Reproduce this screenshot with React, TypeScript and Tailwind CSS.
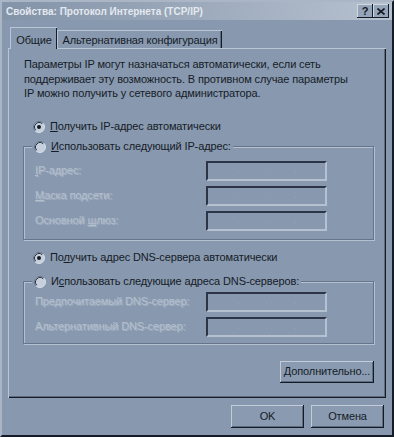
import React from 'react';

const font = { fontFamily: '"Liberation Sans", Arial, sans-serif' };

function Radio({ checked = false }: { checked?: boolean }) {
  return (
    <svg width="12" height="12" viewBox="0 0 12 12" className="shrink-0">
      <circle cx="6" cy="6" r="5.5" fill="#c6d0dc" />
      <path d="M9.89 2.11 A5.5 5.5 0 0 0 2.11 9.89" stroke="#66758b" fill="none" />
      <path d="M2.11 9.89 A5.5 5.5 0 0 0 9.89 2.11" stroke="#d6dee8" fill="none" />
      <path d="M9.18 2.82 A4.5 4.5 0 0 0 2.82 9.18" stroke="#2a3445" fill="none" />
      {checked && <circle cx="6" cy="6" r="2" fill="#111822" />}
    </svg>
  );
}

function U({ children }: { children: React.ReactNode }) {
  return <span className="underline underline-offset-[1px]">{children}</span>;
}

function Field() {
  return (
    <div className="w-[121px] h-[20px] border-2 border-t-[#2b3547] border-l-[#2b3547] border-b-[#b5c1d0] border-r-[#b5c1d0] flex items-center justify-around px-4 text-[9px] text-[#9aa8ba]">
      <span>.</span>
      <span>.</span>
      <span>.</span>
    </div>
  );
}

function Label({ children }: { children: React.ReactNode }) {
  return (
    <span className="text-[#b3bfce] [text-shadow:1px_1px_0_#a2afc1]">{children}</span>
  );
}

function Button({ children, className = '' }: { children: React.ReactNode; className?: string }) {
  return (
    <div
      className={`h-[22px] flex items-center justify-center text-[#151c28] bg-[#8a9ab0] shadow-[inset_-1px_-1px_0_#141b27,inset_1px_1px_0_#c2ccd9,inset_-2px_-2px_0_#5e6c81] ${className}`}
    >
      {children}
    </div>
  );
}

export default function App() {
  return (
    <div
      style={font}
      className="w-[394px] h-[437px] flex flex-col bg-[#8898ae] text-[11px] tracking-[-0.12px] text-[#151c28] border-2 border-t-[#aab6c6] border-l-[#aab6c6] border-r-[#151c28] border-b-[#151c28] overflow-hidden"
    >
      {/* Title bar */}
      <div className="h-[18px] flex items-center justify-between pl-[4px] pr-[3px] bg-gradient-to-r from-[#8393a8] to-[#b6c1cf]">
        <span className="font-bold text-[10px] tracking-normal text-[#e4e9ef]">Свойства: Протокол Интернета (TCP/IP)</span>
        <div className="flex">
          <div className="w-[16px] h-[14px] flex items-center justify-center font-bold text-[11px] text-[#111822] bg-[#95a4b8] shadow-[inset_-1px_-1px_0_#141b27,inset_1px_1px_0_#d0d8e2]">
            ?
          </div>
          <div className="w-[16px] h-[14px] flex items-center justify-center bg-[#95a4b8] shadow-[inset_-1px_-1px_0_#141b27,inset_1px_1px_0_#d0d8e2]">
            <svg width="8" height="7" viewBox="0 0 8 7">
              <path d="M0.5 0.5 L7.5 6.5 M7.5 0.5 L0.5 6.5" stroke="#111822" strokeWidth="1.6" />
            </svg>
          </div>
        </div>
      </div>

      <div className="flex flex-col px-[6px]">
        {/* Tabs */}
        <div className="h-[21px] mt-[7px] flex items-end pl-[2px]">
          <div className="relative z-10 -mb-px h-[22px] w-[47px] flex items-start justify-center pt-[4px] bg-[#8898ae] border-t border-l border-t-[#b9c5d4] border-l-[#b9c5d4] shadow-[inset_-1px_0_0_#151c28]">
            Общие
          </div>
          <div className="h-[18px] w-[165px] flex items-center justify-center pt-[1px] border-t border-l border-t-[#b9c5d4] border-l-[#b9c5d4] shadow-[inset_-1px_0_0_#151c28,inset_-2px_0_0_#5e6c81]">
            Альтернативная конфигурация
          </div>
        </div>

        {/* Panel */}
        <div className="h-[350px] flex flex-col border-t border-l border-t-[#b9c5d4] border-l-[#b9c5d4] shadow-[inset_-1px_-1px_0_#151c28,inset_-2px_-2px_0_#5e6c81] pl-[14px] pr-[12px] pt-[8px]">
          <p className="pl-[1px] leading-[14.5px]">
            Параметры IP могут назначаться автоматически, если сеть
            <br />
            поддерживает эту возможность. В противном случае параметры
            <br />
            IP можно получить у сетевого администратора.
          </p>

          <div className="mt-[19px] h-[14px] flex items-center gap-[5px] pl-[10px]">
            <Radio checked />
            <span>
              <U>П</U>олучить IP-адрес автоматически
            </span>
          </div>

          <fieldset className="mt-[6px] border border-[#66758b] shadow-[1px_1px_0_#b5c1d0,inset_1px_1px_0_#b5c1d0] px-[8px] pb-[8px]">
            <legend className="h-[14px] flex items-center gap-[5px] px-[2px] bg-[#8898ae]">
              <Radio />
              <span>
                <U>И</U>спользовать следующий IP-адрес:
              </span>
            </legend>
            <div className="mt-[7px] flex flex-col gap-[5px]">
              <div className="flex items-center justify-between pl-[3px] pr-[38px]">
                <Label>
                  <U>I</U>P-адрес:
                </Label>
                <Field />
              </div>
              <div className="flex items-center justify-between pl-[3px] pr-[38px]">
                <Label>
                  <U>М</U>аска подсети:
                </Label>
                <Field />
              </div>
              <div className="flex items-center justify-between pl-[3px] pr-[38px]">
                <Label>
                  Основной <U>ш</U>люз:
                </Label>
                <Field />
              </div>
            </div>
          </fieldset>

          <div className="mt-[11px] h-[14px] flex items-center gap-[5px] pl-[10px]">
            <Radio checked />
            <span>
              По<U>л</U>учить адрес DNS-сервера автоматически
            </span>
          </div>

          <fieldset className="mt-[10px] border border-[#66758b] shadow-[1px_1px_0_#b5c1d0,inset_1px_1px_0_#b5c1d0] px-[8px] pb-[6px]">
            <legend className="h-[14px] flex items-center gap-[5px] px-[2px] bg-[#8898ae]">
              <Radio />
              <span>
                И<U>с</U>пользовать следующие адреса DNS-серверов:
              </span>
            </legend>
            <div className="mt-[3px] flex flex-col gap-[5px]">
              <div className="flex items-center justify-between pl-[3px] pr-[38px]">
                <Label>Предпочитаемый DNS-сервер:</Label>
                <Field />
              </div>
              <div className="flex items-center justify-between pl-[3px] pr-[38px]">
                <Label>Альтернативный DNS-сервер:</Label>
                <Field />
              </div>
            </div>
          </fieldset>

          <div className="mt-[17px] flex justify-end">
            <Button className="w-[94px]">
              <span>
                <U>Д</U>ополнительно...
              </span>
            </Button>
          </div>
        </div>

        {/* Dialog buttons */}
        <div className="mt-[7px] flex justify-end gap-[7px] pr-[2px]">
          <Button className="w-[73px] h-[23px]">OK</Button>
          <Button className="w-[73px] h-[23px]">Отмена</Button>
        </div>
      </div>
    </div>
  );
}
